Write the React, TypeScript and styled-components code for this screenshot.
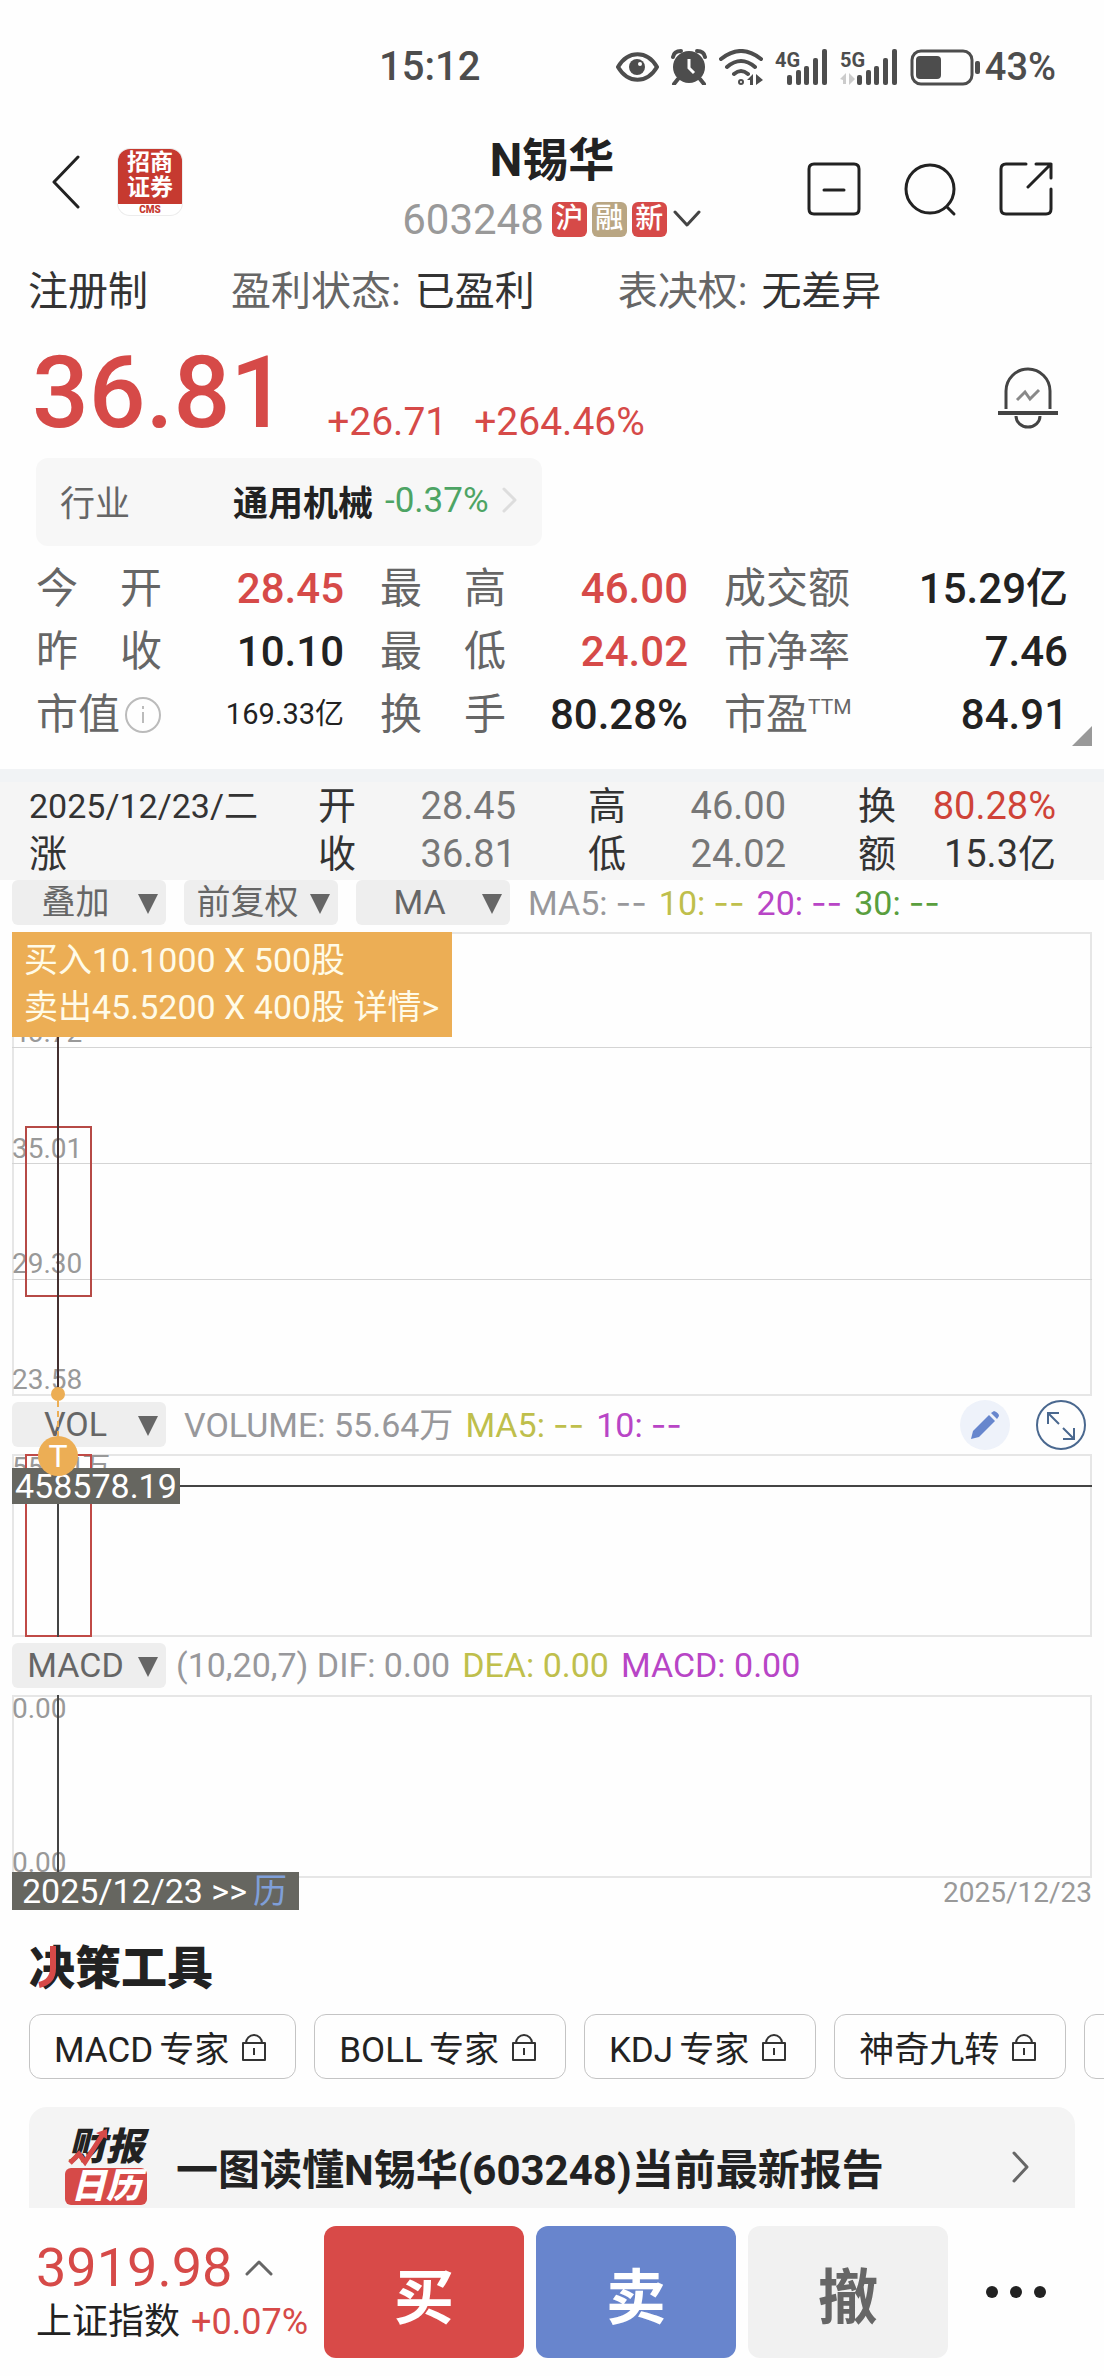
import React from "react";
import styled, { createGlobalStyle } from "styled-components";

const RED = "#d64a48";
const ORANGE = "#ecae55";
const OLIVE = "#bfbf4c";
const PURPLE = "#b845c6";
const GREEN = "#5a9e3e";
const GRAY = "#98989b";

const GlobalStyle = createGlobalStyle`
  * { box-sizing: border-box; }
  body {
    margin: 0;
    background: #fefefe;
    color: #222;
    font-family: Roboto, "Noto Sans CJK SC", sans-serif;
    overflow-x: hidden;
  }
  button, select { font: inherit; color: inherit; border: 0; background: none; padding: 0; margin: 0; }
  h1, h2, p, dl, dt, dd { margin: 0; font: inherit; }
  svg { display: block; flex: none; }
`;

const Page = styled.main`
  overflow: hidden;
  white-space: nowrap;
`;

/* ---------- status bar ---------- */
const StatusBar = styled.div`
  display: flex;
  justify-content: space-between;
  align-items: center;
  padding: 47px 48px 0 379px;
  line-height: 40px;
  font-size: 40px;
  font-weight: 500;
  color: #4d4d4d;
`;
const StatusIcons = styled.div`
  display: flex;
  align-items: center;
  gap: 12px;
`;
const Battery = styled.div`
  display: flex;
  align-items: center;
  gap: 5px;
  font-size: 38px;
`;

/* ---------- header ---------- */
const Header = styled.header`
  display: grid;
  grid-template-columns: 1fr auto 1fr;
  min-height: 128px;
  margin-top: 38px;
  padding: 0 50px;
`;
const HeaderLeft = styled.div`
  display: flex;
  align-items: center;
  gap: 38px;
  padding-bottom: 14px;
`;
const HeaderRight = styled.div`
  display: flex;
  align-items: center;
  justify-content: flex-end;
  gap: 40px;
`;
const Logo = styled.div`
  width: 64px;
  height: 66px;
  border-radius: 12px;
  overflow: hidden;
  text-align: center;
  background: #fff;
  box-shadow: 0 0 0 1px #ececec;
`;
const LogoTop = styled.div`
  background: #c63a30;
  color: #fff;
  font-size: 23px;
  font-weight: 700;
  line-height: 25px;
  padding: 1px 6px 4px;
`;
const LogoFoot = styled.div`
  color: #c63a30;
  font-size: 10px;
  font-weight: 900;
  line-height: 11px;
`;
const Title = styled.h1`
  font-size: 46px;
  font-weight: 700;
  line-height: 70px;
  text-align: center;
`;
const CodeRow = styled.button`
  display: flex;
  align-items: center;
  height: 48px;
  gap: 5px;
  font-size: 42px;
  color: #999;
`;
const Code = styled.span`
  margin-right: 3px;
`;
const Tag = styled.span<{ $bg: string }>`
  width: 35px;
  height: 35px;
  border-radius: 6px;
  background: ${(p) => p.$bg};
  color: #fff;
  font-size: 28px;
  font-weight: 500;
  line-height: 34px;
  text-align: center;
`;

/* ---------- info strip ---------- */
const InfoStrip = styled.div`
  display: flex;
  align-items: center;
  gap: 83px;
  height: 70px;
  margin-bottom: 4px;
  padding: 0 28px;
  font-size: 40px;
  color: #333;
`;
const Dim = styled.span`
  color: #666;
  margin-right: 14px;
`;

/* ---------- quote ---------- */
const Quote = styled.section`
  position: relative;
  padding: 16px 36px 23px;
`;
const PriceRow = styled.div`
  display: flex;
  align-items: flex-end;
  color: ${RED};
`;
const Price = styled.strong`
  font-size: 100px;
  font-weight: 500;
  line-height: 100px;
  margin-left: -4px;
`;
const Changes = styled.div`
  display: flex;
  gap: 27px;
  margin-left: 40px;
  font-size: 39px;
  line-height: 42px;
`;
const BellButton = styled.button`
  margin: 0 10px 14px auto;
`;
const Industry = styled.a`
  display: flex;
  align-items: center;
  width: 506px;
  height: 88px;
  margin-top: 15px;
  padding: 0 24px 4px;
  border-radius: 12px;
  background: #f7f7f7;
  color: #666;
  font-size: 35px;
  text-decoration: none;
`;
const IndustryName = styled.b`
  margin: 0 12px 0 103px;
  color: #222;
`;
const IndustryChange = styled.span`
  margin-right: 12px;
  color: #4da464;
`;
const Stats = styled.dl`
  display: grid;
  grid-template-columns: 308fr 308fr 344fr;
  column-gap: 36px;
  margin-top: 11px;
  font-size: 42px;
  line-height: 63px;
`;
const Stat = styled.div`
  display: flex;
  justify-content: space-between;
  align-items: center;
`;
const StatLabel = styled.dt`
  display: flex;
  justify-content: space-between;
  align-items: center;
  width: 126px;
  color: #666;
`;
const StatValue = styled.dd<{ $up?: boolean; $small?: boolean }>`
  color: ${(p) => (p.$up ? RED : "#222")};
  font-size: ${(p) => (p.$small ? 29 : 42)}px;
  font-weight: ${(p) => (p.$small ? 400 : 500)};
`;
const Sup = styled.sup`
  margin-right: 3px;
  padding-bottom: 16px;
  font-size: 21px;
  line-height: 24px;
`;
const Corner = styled.span`
  position: absolute;
  right: 12px;
  bottom: 23px;
  border: 10px solid transparent;
  border-right-color: #999;
  border-bottom-color: #999;
`;

/* ---------- day band ---------- */
const DayBand = styled.section`
  display: grid;
  grid-template-columns: minmax(0, 217fr) repeat(3, minmax(0, 198fr));
  column-gap: 72px;
  padding: 0 48px 2px 29px;
  border-top: 13px solid #f1f3f5;
  background: #f5f5f5;
  font-size: 38px;
  line-height: 48px;
  color: #333;
`;
const DayDate = styled.span`
  font-size: 34px;
`;
const DayCell = styled.div`
  display: flex;
  justify-content: space-between;
`;
const DayValue = styled.span<{ $color: string }>`
  color: ${(p) => p.$color};
`;

/* ---------- charts ---------- */
const Charts = styled.section`
  position: relative;
  padding: 0 12px;
`;
const Toolbar = styled.div`
  display: flex;
  align-items: center;
  gap: 18px;
  height: 45px;
  margin: 6px 0 7px;
  font-size: 34px;
  &:first-child { margin-top: 0; }
`;
const Picker = styled.label`
  position: relative;
  width: 154px;
  height: 45px;
  border-radius: 6px;
  background: #eee;
  color: #666;
  &::after {
    content: "";
    position: absolute;
    right: 8px;
    top: 14px;
    border: 10px solid transparent;
    border-top: 20px solid #666;
    border-bottom: 0;
    pointer-events: none;
  }
`;
const PickerSelect = styled.select`
  appearance: none;
  width: 100%;
  height: 45px;
  padding-right: 27px;
  line-height: 45px;
  text-align: center;
  text-align-last: center;
`;
const Legend = styled.div<{ $tight?: boolean }>`
  display: flex;
  align-items: baseline;
  gap: 12px;
  line-height: 45px;
  margin-left: ${(p) => (p.$tight ? -8 : 0)}px;
`;
const LegendItem = styled.span<{ $color: string }>`
  color: ${(p) => p.$color};
`;
const Dashes = styled.span`
  margin-left: 8px;
  font-family: Inter, sans-serif;
`;
const ToolButtons = styled.div`
  display: flex;
  gap: 26px;
  margin: 0 6px 0 auto;
`;
const Pane = styled.div<{ $h: number }>`
  position: relative;
  height: ${(p) => p.$h}px;
  border: 2px solid #e6e6e6;
`;
const Plot = styled.svg`
  position: absolute;
  left: -2px;
  top: -2px;
  width: calc(100% + 4px);
  height: calc(100% + 4px);
`;
const Scale = styled.span<{ $top: number }>`
  position: absolute;
  left: -2px;
  top: ${(p) => p.$top}px;
  color: #999;
  font-size: 28px;
  line-height: 30px;
`;
const TradeTip = styled.div`
  position: absolute;
  left: -2px;
  top: -2px;
  padding: 5px 13px 6px 12px;
  background: ${ORANGE};
  color: #fffbe8;
  font-size: 34px;
  line-height: 47px;
`;
const CrossValue = styled.span`
  position: absolute;
  left: -2px;
  top: 12px;
  padding: 0 3px;
  background: #666660;
  color: #fff;
  font-size: 34px;
  line-height: 36px;
`;
const Marker = styled.svg`
  position: absolute;
  left: 38px;
  top: 507px;
`;
const DateFooter = styled.div`
  position: relative;
  display: flex;
  justify-content: flex-end;
  color: #999;
  font-size: 28px;
  line-height: 30px;
`;
const DateTag = styled.button`
  && {
    position: absolute;
    left: 0;
    top: -6px;
    padding: 0 12px 0 10px;
    background: #666660;
    color: #fff;
    font-size: 34px;
    line-height: 38px;
  }
`;
const Blue = styled.span`
  margin-left: 6px;
  color: #7f9fd8;
`;

/* ---------- tools ---------- */
const Tools = styled.section`
  padding: 30px 0 0 29px;
`;
const ToolsTitle = styled.h2`
  position: relative;
  font-size: 46px;
  font-weight: 900;
  line-height: 60px;
`;
const TitleStroke = styled.svg`
  position: absolute;
  left: 9px;
  top: 8px;
`;
const Chips = styled.div`
  display: flex;
  gap: 18px;
  margin-top: 16px;
  overflow: hidden;
`;
const Chip = styled.button`
  && {
    display: flex;
    flex: none;
    align-items: center;
    gap: 12px;
    height: 65px;
    padding: 0 28px 0 24px;
    border: 1px solid #c4c4c4;
    border-radius: 12px;
    font-size: 35px;
  }
`;
const ChipName = styled.span`
  margin-right: 6px;
`;
const ReportCard = styled.a`
  display: flex;
  align-items: center;
  height: 101px;
  margin: 28px 29px 0 0;
  padding: 18px 45px 0 36px;
  border-radius: 18px 18px 0 0;
  background: #f4f4f4;
  color: #222;
  font-size: 42px;
  font-weight: 700;
  text-decoration: none;
`;
const ReportLogo = styled.div`
  position: relative;
  width: 82px;
  margin-right: 29px;
  font-size: 38px;
  font-style: italic;
  font-weight: 900;
  line-height: 38px;
  text-align: center;
`;
const ReportLogoRed = styled.div`
  margin-top: 2px;
  border-radius: 6px;
  background: ${RED};
  color: #fff;
  font-size: 35px;
  line-height: 37px;
`;
const ReportStroke = styled.svg`
  position: absolute;
  left: 3px;
  top: 0;
`;
const ReportTitle = styled.span`
  flex: 1;
`;

/* ---------- trade bar ---------- */
const TradeBar = styled.footer`
  display: flex;
  align-items: center;
  gap: 12px;
  padding: 18px 52px 18px 36px;
`;
const IndexBox = styled.div`
  width: 276px;
  color: ${RED};
`;
const IndexValue = styled.div`
  display: flex;
  align-items: center;
  gap: 13px;
  font-size: 54px;
  line-height: 60px;
`;
const IndexName = styled.div`
  display: flex;
  gap: 11px;
  font-size: 36px;
  line-height: 48px;
`;
const Ink = styled.span`
  color: #222;
`;
const TradeButton = styled.button<{ $bg: string; $fg: string }>`
  && {
    flex: 1;
    height: 132px;
    border-radius: 12px;
    background: ${(p) => p.$bg};
    color: ${(p) => p.$fg};
    font-size: 60px;
    font-weight: 700;
  }
`;
const MoreButton = styled.button`
  && { margin-left: 22px; }
`;

const Lines: React.FC<{ w: number; h: number; d: string; color?: string; sw?: number }> = ({
  w, h, d, color = "#222", sw = 3,
}) => (
  <svg width={w} height={h} viewBox={`0 0 ${w} ${h}`} fill="none" stroke={color} strokeWidth={sw} strokeLinecap="round" strokeLinejoin="round">
    <path d={d} />
  </svg>
);

const Signal: React.FC<{ label: string; idle?: boolean }> = ({ label, idle }) => {
  const start = idle ? 17 : 12;
  return (
    <svg width={start + 41} height="36" viewBox={`0 0 ${start + 41} 36`} fill="#4d4d4d" overflow="visible">
      <text x="0" y="18" fontSize="20" fontWeight="700" fontFamily="Roboto, sans-serif">{label}</text>
      {[[0, 26], [9, 21], [17, 17], [26, 9], [35, 0]].map(([x, y]) => (
        <rect key={x} x={start + x} y={y} width="5" height={36 - y} rx="2" />
      ))}
      {idle && <path d="M0 30 L6 24 V35 H3 V31Z M9 24 L15 30 L9 36Z" fill="#ccc" />}
    </svg>
  );
};

const Lock = () => (
  <svg width="26" height="30" viewBox="0 0 26 30" fill="none" stroke="#333" strokeWidth="2">
    <path d="M2 11H24V28H2Z M5 11A8 8 0 0 1 21 11 M13 16V23" strokeLinejoin="round" />
  </svg>
);

const Select: React.FC<{ name: string; value: string }> = ({ name, value }) => (
  <Picker>
    <PickerSelect aria-label={name} defaultValue={value}>
      <option>{value}</option>
    </PickerSelect>
  </Picker>
);

const stats: { label: React.ReactNode; value: string; up?: boolean; small?: boolean }[] = [
  { label: <><span>今</span><span>开</span></>, value: "28.45", up: true },
  { label: <><span>最</span><span>高</span></>, value: "46.00", up: true },
  { label: "成交额", value: "15.29亿" },
  { label: <><span>昨</span><span>收</span></>, value: "10.10" },
  { label: <><span>最</span><span>低</span></>, value: "24.02", up: true },
  { label: "市净率", value: "7.46" },
  {
    label: (
      <>
        市值
        <svg width="38" height="38" viewBox="0 0 38 38" fill="none" stroke="#bbb" strokeWidth="2">
          <circle cx="19" cy="19" r="17" />
          <path d="M19 16V27 M19 10V13" />
        </svg>
      </>
    ),
    value: "169.33亿",
    small: true,
  },
  { label: <><span>换</span><span>手</span></>, value: "80.28%" },
  { label: <>市盈<Sup>TTM</Sup></>, value: "84.91" },
];

const days: [string, string, string][] = [
  ["开", "28.45", "#777"], ["高", "46.00", "#777"], ["换", "80.28%", "#cf4338"],
  ["收", "36.81", "#777"], ["低", "24.02", "#777"], ["额", "15.3亿", "#333"],
];

const experts = [["MACD", "专家"], ["BOLL", "专家"], ["KDJ", "专家"], ["", "神奇九转"]];

const Average: React.FC<{ name: string; color: string }> = ({ name, color }) => (
  <LegendItem $color={color}>{name}:<Dashes>--</Dashes></LegendItem>
);

export default function App() {
  return (
    <Page>
      <GlobalStyle />
      <StatusBar>
        <span>15:12</span>
        <StatusIcons>
          <svg width="43" height="30" viewBox="0 0 43 30">
            <path d="M2 15C12 -2 31 -2 41 15C31 32 12 32 2 15Z" fill="none" stroke="#4d4d4d" strokeWidth="4" />
            <circle cx="21" cy="15" r="8" fill="#4d4d4d" />
            <circle cx="24" cy="12" r="2" fill="#fff" />
          </svg>
          <svg width="36" height="36" viewBox="0 0 36 36" fill="#4d4d4d">
            <circle cx="18" cy="18" r="16" />
            <path d="M2 8Q3 2 10 2M34 8Q33 2 26 2M7 30L3 35M29 30L33 35" fill="none" stroke="#4d4d4d" strokeWidth="4" strokeLinecap="round" />
            <path d="M18 10V19L23 24" fill="none" stroke="#fff" strokeWidth="3" />
          </svg>
          <svg width="44" height="36" viewBox="0 0 44 36" fill="none" stroke="#4d4d4d" strokeWidth="4" strokeLinecap="round">
            <path d="M2 10Q22 -6 42 10M8 18Q22 6 36 18M15 25Q22 19 29 25" />
            <circle cx="22" cy="33" r="1" />
            <path d="M28 31L34 25V36H31V31Z M37 25L44 31L37 36Z" fill="#4d4d4d" stroke="none" />
          </svg>
          <Signal label="4G" />
          <Signal label="5G" idle />
          <Battery>
            <svg width="70" height="37" viewBox="0 0 70 37" fill="#4d4d4d">
              <rect x="2" y="2" width="60" height="33" rx="9" fill="none" stroke="#4d4d4d" strokeWidth="3" />
              <rect x="6" y="7" width="25" height="23" rx="4" />
              <rect x="65" y="12" width="5" height="13" rx="2" />
            </svg>
            <span>43%</span>
          </Battery>
        </StatusIcons>
      </StatusBar>

      <Header>
        <HeaderLeft>
          <button aria-label="返回"><Lines w={30} h={56} d="M28 3L4 28L28 53" /></button>
          <Logo>
            <LogoTop>招商<br />证券</LogoTop>
            <LogoFoot>CMS</LogoFoot>
          </Logo>
        </HeaderLeft>
        <div>
          <Title>N锡华</Title>
          <CodeRow>
            <Code>603248</Code>
            <Tag $bg={RED}>沪</Tag>
            <Tag $bg="#b9a683">融</Tag>
            <Tag $bg={RED}>新</Tag>
            <Lines w={30} h={18} d="M3 2L15 15L27 2" color="#444" />
          </CodeRow>
        </div>
        <HeaderRight>
          <button aria-label="移除自选"><Lines w={56} h={56} d="M8 3H48Q53 3 53 8V48Q53 53 48 53H8Q3 53 3 48V8Q3 3 8 3Z M18 29H38" /></button>
          <button aria-label="搜索"><Lines w={56} h={56} d="M28 4A24 24 0 0 1 28 52A24 24 0 0 1 28 4Z M45 46L52 53" /></button>
          <button aria-label="分享"><Lines w={56} h={56} d="M28 3H8Q3 3 3 8V48Q3 53 8 53H48Q53 53 53 48V28 M38 3H53V17 M53 3L30 26" /></button>
        </HeaderRight>
      </Header>

      <InfoStrip>
        <span>注册制</span>
        <span><Dim>盈利状态:</Dim>已盈利</span>
        <span><Dim>表决权:</Dim>无差异</span>
      </InfoStrip>

      <Quote>
        <PriceRow>
          <Price>36.81</Price>
          <Changes><span>+26.71</span><span>+264.46%</span></Changes>
          <BellButton aria-label="预警">
            <svg width="60" height="62" viewBox="0 0 60 62" fill="none" stroke="#444" strokeWidth="3">
              <path d="M8 42V24A22 22 0 0 1 52 24V42 M18 49A12 11 0 0 0 42 49" />
              <path d="M0 46H60" strokeWidth="4" />
              <path d="M19 33L27 25L32 32L41 23" stroke="#888" />
            </svg>
          </BellButton>
        </PriceRow>
        <Industry href="#industry">
          行业
          <IndustryName>通用机械</IndustryName>
          <IndustryChange>-0.37%</IndustryChange>
          <Lines w={18} h={26} d="M3 2L14 13L3 24" color="#ddd" />
        </Industry>
        <Stats>
          {stats.map((s) => (
            <Stat key={s.value}>
              <StatLabel>{s.label}</StatLabel>
              <StatValue $up={s.up} $small={s.small}>{s.value}</StatValue>
            </Stat>
          ))}
        </Stats>
        <Corner />
      </Quote>

      <DayBand>
        <DayDate>2025/12/23/二</DayDate>
        {days.slice(0, 3).map(([k, v, c]) => (
          <DayCell key={k}><span>{k}</span><DayValue $color={c}>{v}</DayValue></DayCell>
        ))}
        <span>涨</span>
        {days.slice(3).map(([k, v, c]) => (
          <DayCell key={k}><span>{k}</span><DayValue $color={c}>{v}</DayValue></DayCell>
        ))}
      </DayBand>

      <Charts>
        <Toolbar>
          <Select name="叠加" value="叠加" />
          <Select name="复权" value="前复权" />
          <Select name="主图指标" value="MA" />
          <Legend>
            <Average name="MA5" color={GRAY} />
            <Average name="10" color={OLIVE} />
            <Average name="20" color={PURPLE} />
            <Average name="30" color={GREEN} />
          </Legend>
        </Toolbar>
        <Pane $h={464}>
          <Scale $top={84}>40.72</Scale>
          <Scale $top={200}>35.01</Scale>
          <Scale $top={315}>29.30</Scale>
          <Scale $top={431}>23.58</Scale>
          <Plot>
            {[115, 231, 347].map((y) => (
              <rect key={y} x="0" y={y} width="100%" height="1" fill="#d4d4d4" />
            ))}
            <rect x="14" y="195" width="65" height="169" fill="none" stroke="#b64a46" strokeWidth="2" />
            <rect x="45" y="100" width="2" height="364" fill="#443030" />
          </Plot>
          <TradeTip>
            买入10.1000 X 500股<br />卖出45.5200 X 400股 详情&gt;
          </TradeTip>
        </Pane>

        <Toolbar>
          <Select name="副图一" value="VOL" />
          <Legend>
            <LegendItem $color={GRAY}>VOLUME: 55.64万</LegendItem>
            <Average name="MA5" color={OLIVE} />
            <Average name="10" color={PURPLE} />
          </Legend>
          <ToolButtons>
            <button aria-label="画线">
              <svg width="50" height="50" viewBox="0 0 50 50">
                <circle cx="25" cy="25" r="25" fill="#eef2fa" />
                <path d="M11 39L13 31L29 15L35 21L19 37Z" fill="#6786cd" />
                <path d="M31 13L34 11Q39 13 39 16L37 19Z" fill="#6786cd" />
              </svg>
            </button>
            <button aria-label="全屏">
              <svg width="50" height="50" viewBox="0 0 50 50" fill="none" stroke="#4a688f" strokeWidth="2">
                <circle cx="25" cy="25" r="24" />
                <path d="M23 24L12 13M12 24V13H23M27 28L38 39M38 28V39H27" />
              </svg>
            </button>
          </ToolButtons>
        </Toolbar>
        <Pane $h={183}>
          <Scale $top={-3}>55.64万</Scale>
          <Plot>
            <rect x="14" y="1" width="65" height="181" fill="none" stroke="#c04a46" strokeWidth="2" />
            <rect x="45" y="0" width="2" height="183" fill="#444" />
            <rect x="0" y="31" width="100%" height="2" fill="#444" />
          </Plot>
          <CrossValue>458578.19</CrossValue>
        </Pane>

        <Toolbar>
          <Select name="副图二" value="MACD" />
          <Legend $tight>
            <LegendItem $color={GRAY}>(10,20,7) DIF: 0.00</LegendItem>
            <LegendItem $color={OLIVE}>DEA: 0.00</LegendItem>
            <LegendItem $color={PURPLE}>MACD: 0.00</LegendItem>
          </Legend>
        </Toolbar>
        <Pane $h={183}>
          <Scale $top={-3}>0.00</Scale>
          <Scale $top={151}>0.00</Scale>
          <Plot><rect x="45" y="0" width="2" height="183" fill="#444" /></Plot>
        </Pane>
        <DateFooter>
          2025/12/23
          <DateTag>2025/12/23 &gt;&gt;<Blue>历</Blue></DateTag>
        </DateFooter>
        <Marker width="40" height="90" viewBox="0 0 40 90">
          <path d="M20 14V50" stroke={ORANGE} strokeWidth="2" strokeDasharray="6 4" />
          <circle cx="20" cy="7" r="7" fill={ORANGE} />
          <circle cx="20" cy="69" r="20" fill={ORANGE} />
          <text x="20" y="80" textAnchor="middle" fontSize="32" fill="#fff" fontFamily="Roboto, sans-serif">T</text>
        </Marker>
      </Charts>

      <Tools>
        <ToolsTitle>
          决策工具
          <TitleStroke width="24" height="42" viewBox="0 0 24 42">
            <path d="M15 0V22Q15 36 1 39" fill="none" stroke={RED} strokeWidth="6" />
          </TitleStroke>
        </ToolsTitle>
        <Chips>
          {experts.map(([latin, name]) => (
            <Chip key={latin + name}>
              <span>{latin && <ChipName>{latin}</ChipName>}{name}</span>
              <Lock />
            </Chip>
          ))}
          <Chip as="span" />
        </Chips>
        <ReportCard href="#report">
          <ReportLogo>
            财报
            <ReportLogoRed>日历</ReportLogoRed>
            <ReportStroke width="44" height="38" viewBox="0 0 44 38">
              <path d="M2 35L11 26L17 34L35 6" fill="none" stroke={RED} strokeWidth="5" />
              <path d="M28 5L39 1V11Z" fill={RED} />
            </ReportStroke>
          </ReportLogo>
          <ReportTitle>一图读懂N锡华(603248)当前最新报告</ReportTitle>
          <Lines w={18} h={32} d="M2 2L15 16L2 30" color="#666" />
        </ReportCard>
      </Tools>

      <TradeBar>
        <IndexBox>
          <IndexValue>3919.98<Lines w={28} h={18} d="M2 15L14 3L26 15" color="#666" /></IndexValue>
          <IndexName><Ink>上证指数</Ink>+0.07%</IndexName>
        </IndexBox>
        <TradeButton $bg="#d84a48" $fg="#fff">买</TradeButton>
        <TradeButton $bg="#6885cd" $fg="#fff">卖</TradeButton>
        <TradeButton $bg="#f1f1f1" $fg="#666">撤</TradeButton>
        <MoreButton aria-label="更多">
          <svg width="70" height="20" viewBox="0 0 70 20" fill="#222">
            <circle cx="10" cy="10" r="6" />
            <circle cx="34" cy="10" r="6" />
            <circle cx="58" cy="10" r="6" />
          </svg>
        </MoreButton>
      </TradeBar>
    </Page>
  );
}
